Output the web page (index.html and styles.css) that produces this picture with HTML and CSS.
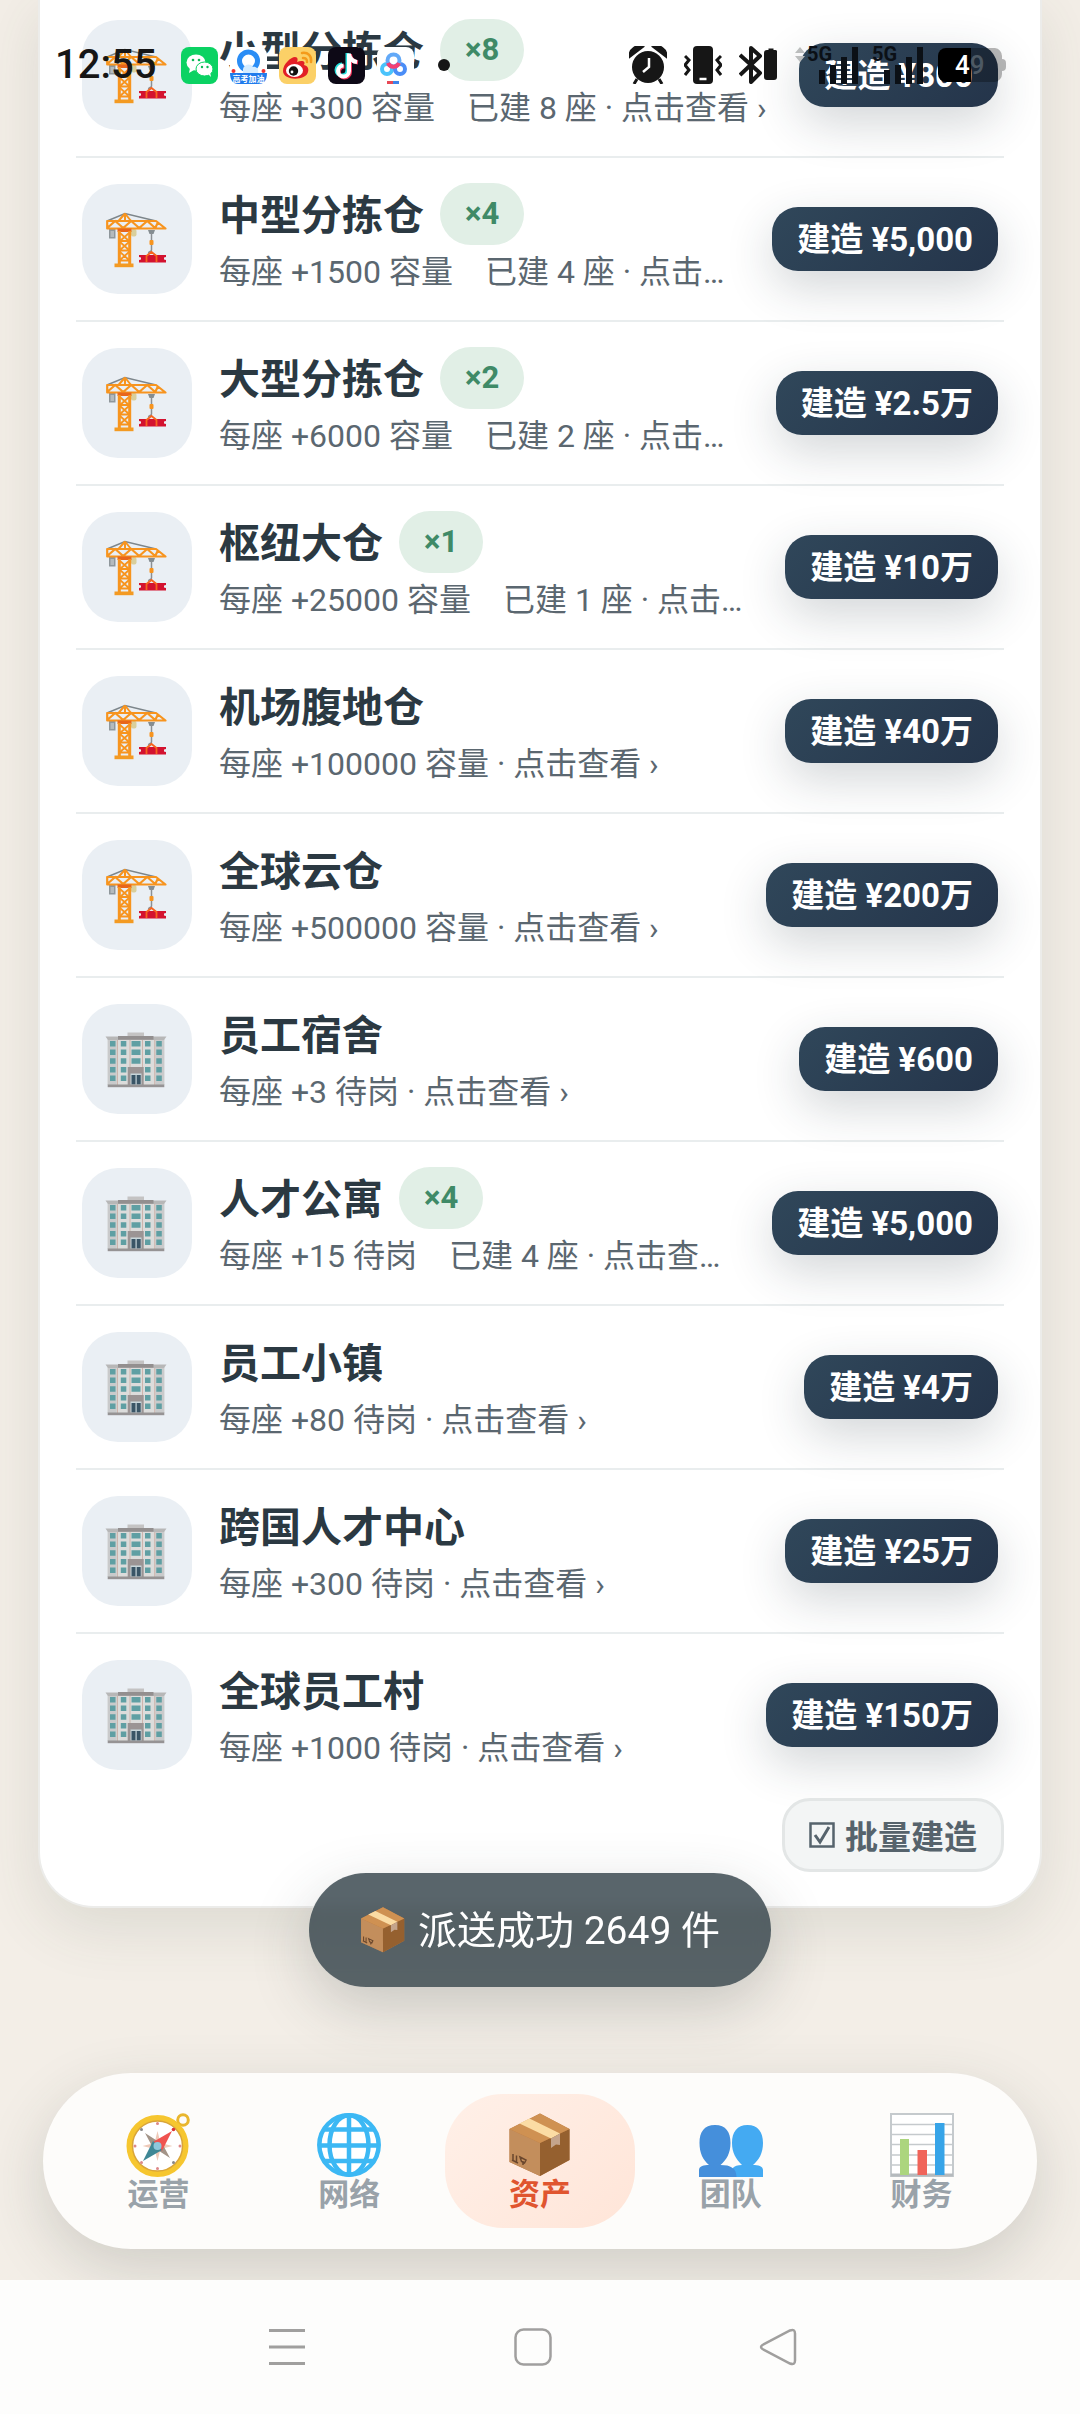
FILE: index.html
```html
<!DOCTYPE html>
<html lang="zh-CN">
<head>
<meta charset="utf-8">
<meta name="viewport" content="width=device-width, initial-scale=1">
<title>资产</title>
<link rel="stylesheet" href="styles.css">
</head>
<body>
<svg class="sprite" aria-hidden="true">
  <symbol id="crane" viewBox="10 9 64 60">
    <path d="M12 21 30 13.500 61 21" fill="none" stroke="#7d868b" stroke-width="1.600"/>
    <rect x="14" y="29" width="6.500" height="9.500" fill="#8f979b"/><rect x="15.500" y="31" width="3.500" height="6" fill="#b4babd"/>
    <rect x="36" y="29" width="5.500" height="7.500" rx="2" fill="#d9cf9c"/>
    <path d="M30 13.500 23.500 21M30 13.500 36 21M30 14v8" stroke="#f7941e" stroke-width="2" fill="none"/>
    <path d="M12.200 21H61l9.500 7.500H12.200zM12.200 28l8-7 8 7 8-7 8 7 8-7 8 7 3-6" fill="none" stroke="#f7941e" stroke-width="2.200" stroke-linejoin="round"/>
    <rect x="22.500" y="28.500" width="14" height="3.500" fill="#e8661b"/>
    <path d="M24.300 31v34M34.700 31v34" stroke="#f7941e" stroke-width="3"/>
    <path d="M25 33l9 8M34 33l-9 8M25 41h9M25 42l9 8M34 42l-9 8M25 50.500h9M25 52l9 8M34 52l-9 8M25 60.500h9" stroke="#f7941e" stroke-width="1.800"/>
    <rect x="19.500" y="63.500" width="19" height="3.700" fill="#f39a22"/>
    <path d="M53 30h7l-1.500 4h-4z" fill="#858d91"/>
    <path d="M56.500 33v17c0 2-3 1-3 3.500" fill="none" stroke="#8b8f92" stroke-width="1.500"/>
    <rect x="54.500" y="40" width="4" height="5" rx="1" fill="#f7941e"/>
    <path d="M44 55h27v2l-2 .5v2l2 .5v2.500H44V60l2-.5v-2L44 57z" fill="#d3122f"/>
    <path d="M51.500 62v-6l5-4 5 4v6" fill="none" stroke="#f7641e" stroke-width="1.800"/>
  </symbol>
  <symbol id="building" viewBox="0 0 64 60">
    <rect x="22.500" y="3.500" width="16.500" height="4.500" fill="#c4c3c3"/>
    <rect x="2.700" y="10" width="56.600" height="46" fill="#dcdcdb"/>
    <rect x="2.700" y="10" width="9" height="46" fill="#c9cacb"/><rect x="50.300" y="10" width="9" height="46" fill="#c9cacb"/>
    <path d="M12.500 10v46M25 10v28M37.500 10v28M49.700 10v46" stroke="#c9a9a0" stroke-width=".8"/>
    <path d="M.5 7.500h61l-2.500 3.500H3z" fill="#b7b7b7"/><rect x="13" y="7" width="35.500" height="3.700" fill="#938f8f"/>
    <rect x="22.700" y="38" width="16" height="18" fill="#9b9494"/>
    <g fill="#5f9fa3">
      <path d="M5 12h5.500v5.500H5zM5 20.600h5.500v5.500H5zM5 29.300h5.500v5.500H5zM5 38h5.500v5.500H5zM5 46.600h5.500v5.500H5z"/>
      <path d="M15.800 12h5.500v5.500h-5.500zM15.800 20.600h5.500v5.500h-5.500zM15.800 29.300h5.500v5.500h-5.500zM15.800 38h5.500v5.500h-5.500zM15.800 46.600h5.500v5.500h-5.500z"/>
      <path d="M26.500 12h9v5.500h-9zM26.500 20.600h9v5.500h-9zM26.500 29.300h9v5.500h-9z"/>
      <path d="M40 12h5.500v5.500H40zM40 20.600h5.500v5.500H40zM40 29.300h5.500v5.500H40zM40 38h5.500v5.500H40zM40 46.600h5.500v5.500H40z"/>
      <path d="M51.300 12h5.500v5.500h-5.500zM51.300 20.600h5.500v5.500h-5.500zM51.300 29.300h5.500v5.500h-5.500zM51.300 38h5.500v5.500h-5.500zM51.300 46.600h5.500v5.500h-5.500z"/>
    </g>
    <rect x="25.500" y="44.500" width="11" height="11.500" fill="#c8d6da"/><path d="M26.500 46h4v9.500h-4zM31.700 46h4v9.500h-4z" fill="#3a5566"/>
    <rect x="2.700" y="55.500" width="56.600" height="2.700" fill="#969394"/>
  </symbol>
  <symbol id="box" viewBox="8 11 64 64">
    <path d="M9.500 27 40 11.500 69.500 27v31L40 74 9.500 60z" fill="#b97a45"/>
    <path d="M9.500 27 40 41v33L9.500 60z" fill="#c38e5c"/>
    <path d="M69.500 27 40 41v33l29.500-16z" fill="#95602f"/>
    <path d="M9.500 27 40 11.500 69.500 27 40 41z" fill="#cf9152"/>
    <path d="M19.500 21.500 29.500 16.500 60 31.500 51 36.500z" fill="#fbdca4"/>
    <path d="M51 36.500 60 31.500v11.500l-4-.5-5 3.500z" fill="#c4a48c"/>
    <path d="M13 52v6M16.500 53.500v6M12 58l6 3M20 55l6 3-1.500 3-3-1.500zM23 59v4" stroke="#6a472d" stroke-width="1.500" fill="none"/>
  </symbol>
</svg>

<div class="screen">
  <header class="status">
    <time class="clock">12:55</time>
    <div class="notices" aria-hidden="true">
      <svg viewBox="0 0 37 37"><rect width="37" height="37" rx="8" fill="#0bd263"/><ellipse cx="15" cy="15.500" rx="9.500" ry="8" fill="#fff"/><path d="M9 21l-1 5 5-3z" fill="#fff"/><ellipse cx="23.500" cy="22" rx="8.500" ry="7" fill="#fff" stroke="#0bd263"/><path d="M27 27l3 3-1-5z" fill="#fff"/><g fill="#0bb957"><circle cx="12" cy="13" r="1.300"/><circle cx="18" cy="13" r="1.300"/><circle cx="21" cy="20" r="1.200"/><circle cx="26.500" cy="20" r="1.200"/></g></svg>
      <svg viewBox="0 0 37 37"><rect width="37" height="37" rx="8" fill="#fff"/><circle cx="18.500" cy="14" r="9" fill="none" stroke="#2a8df5" stroke-width="5"/><path d="M13 22c1-5 8-6 10-2 4-1 6 3 5 6H13z" fill="#d4ecff"/><circle cx="3.500" cy="24" r="2" fill="#e33"/><circle cx="33.500" cy="24" r="2" fill="#e33"/><path d="M0 26h37c0 7-3 11-8 11H8c-5 0-8-4-8-11z" fill="#1f7bec"/><text x="18.500" y="34.500" class="tiny">高考加油</text></svg>
      <svg viewBox="0 0 37 37"><rect width="37" height="37" rx="8" fill="#fbd067"/><path d="M4 24c0-7 8-14 12-14 3 0 3 3 2 5 5-2 9-1 7 3 4 1 5 4 4 7-2 9-25 9-25-1z" fill="#e21f26"/><ellipse cx="15.500" cy="23.500" rx="8.500" ry="6.500" fill="#fff"/><circle cx="14.500" cy="24" r="4.700" fill="#111"/><circle cx="13" cy="25" r="1.400" fill="#fff"/><path d="M23 6c6-1 10 3 9 9M24 11c3 0 4 1 4 4" fill="none" stroke="#f49b1b" stroke-width="2.500" stroke-linecap="round"/></svg>
      <svg viewBox="0 0 37 37"><rect width="37" height="37" rx="8" fill="#0d0916"/><g fill="none" stroke-width="4"><path d="M19.500 6v17a5.500 5.500 0 1 1-5.500-5.500M19.500 7c1 5 4 7 8 7.500" stroke="#25dfdc"/><path d="M22 7v18a5.500 5.500 0 1 1-5.500-5.500M22 8c1 5 4 7 8 7.500" stroke="#f0345a"/><path d="M21 6.500v17.500a5.500 5.500 0 1 1-5.500-5.500M21 7.500c1 5 4 7 8 7.500" stroke="#fff"/></g></svg>
      <svg viewBox="0 0 37 37"><rect width="37" height="37" rx="8" fill="#fff"/><g fill="none" stroke-width="4"><circle cx="10" cy="22" r="5" stroke="#4ac3fb"/><circle cx="23" cy="22" r="5" stroke="#4a8df7"/><circle cx="16.500" cy="13.500" r="6" stroke="#62a9f8"/><path d="M11 16c2 5 9 5 11 0" stroke="#f23f73"/></g><path d="M10 35.500h6" stroke="#e84855" stroke-width="3"/><path d="M16 35.500h6" stroke="#3d83ea" stroke-width="3"/></svg>
      <i class="more"></i>
    </div>
    <div class="system" aria-hidden="true">
      <svg class="sys-icon" viewBox="0 0 38 38"><circle cx="19" cy="21" r="16" fill="#161616"/><path d="M1 10C1 3 8-1 13 1zM37 10c0-7-7-11-12-9zM8 33l-3 5M30 33l3 5" fill="#161616" stroke="#161616" stroke-width="3"/><path d="M20 12v9l-6 5" fill="none" stroke="#fff" stroke-width="2.500"/></svg>
      <svg class="sys-icon" viewBox="0 0 38 38"><rect x="9" y="0" width="20" height="38" rx="4" fill="#161616"/><path d="M15.500 33h7" stroke="#fff" stroke-width="2.500"/><path d="M1 10l4 4-4 5 4 5-4 5M37 10l-4 4 4 5-4 5 4 5" fill="none" stroke="#161616" stroke-width="3"/></svg>
      <svg class="sys-icon" viewBox="0 0 38 38"><path d="M1 9l20 18-9 9V2l9 8L1 29" fill="none" stroke="#161616" stroke-width="4" stroke-linejoin="round"/><path d="M25 7a3 3 0 0 1 3-3h1.500V2.500h5V4H36a2 2 0 0 1 2 3v24a3 3 0 0 1-3 3h-7a3 3 0 0 1-3-3z" fill="#161616"/></svg>
      <svg class="traffic" viewBox="0 0 12 38"><path d="M1 7l5-6 5 6zM1 10l5 6 5-6z" fill="#bbbdbd"/></svg>
      <svg class="signal" viewBox="0 0 52 38"><text x="0" y="15" class="net">5G</text><path d="M12 24h6v14h-6zM23 19h6v19h-6zM34 11h6v27h-6zM45 1h6v37h-6z" fill="#0b1016"/></svg>
      <svg class="signal" viewBox="0 0 52 38"><text x="0" y="15" class="net">5G</text><path d="M12 24h6v14h-6zM23 19h6v19h-6zM34 11h6v27h-6zM45 1h6v37h-6z" fill="#0b1016"/></svg>
      <svg class="battery" viewBox="0 0 68 36"><path d="M33 1h24a8 8 0 0 1 7 8v3q4 0 4 4v4q0 4-4 4v3a8 8 0 0 1-7 8H33z" fill="#000" fill-opacity=".28"/><path d="M33 1v34H8a8 8 0 0 1-8-8V9a8 8 0 0 1 8-8z" fill="#000"/><text x="17" y="27" class="level"><tspan fill="#fff">4</tspan><tspan fill="#4d5964">9</tspan></text></svg>
    </div>
  </header>

  <main class="card">
    <ul class="list">
      <li class="row"><span class="tile"><svg><use href="#crane"/></svg></span><div class="info"><h2><span class="name">小型分拣仓</span><span class="badge">×8</span></h2><p>每座 +300 容量　已建 8 座 · 点击查看 ›</p></div><button class="build">建造 ¥800</button></li>
      <li class="row"><span class="tile"><svg><use href="#crane"/></svg></span><div class="info"><h2><span class="name">中型分拣仓</span><span class="badge">×4</span></h2><p>每座 +1500 容量　已建 4 座 · 点击查看 ›</p></div><button class="build">建造 ¥5,000</button></li>
      <li class="row"><span class="tile"><svg><use href="#crane"/></svg></span><div class="info"><h2><span class="name">大型分拣仓</span><span class="badge">×2</span></h2><p>每座 +6000 容量　已建 2 座 · 点击查看 ›</p></div><button class="build">建造 ¥2.5万</button></li>
      <li class="row"><span class="tile"><svg><use href="#crane"/></svg></span><div class="info"><h2><span class="name">枢纽大仓</span><span class="badge">×1</span></h2><p>每座 +25000 容量　已建 1 座 · 点击查看 ›</p></div><button class="build">建造 ¥10万</button></li>
      <li class="row"><span class="tile"><svg><use href="#crane"/></svg></span><div class="info"><h2><span class="name">机场腹地仓</span></h2><p>每座 +100000 容量 · 点击查看 ›</p></div><button class="build">建造 ¥40万</button></li>
      <li class="row"><span class="tile"><svg><use href="#crane"/></svg></span><div class="info"><h2><span class="name">全球云仓</span></h2><p>每座 +500000 容量 · 点击查看 ›</p></div><button class="build">建造 ¥200万</button></li>
      <li class="row"><span class="tile"><svg><use href="#building"/></svg></span><div class="info"><h2><span class="name">员工宿舍</span></h2><p>每座 +3 待岗 · 点击查看 ›</p></div><button class="build">建造 ¥600</button></li>
      <li class="row"><span class="tile"><svg><use href="#building"/></svg></span><div class="info"><h2><span class="name">人才公寓</span><span class="badge">×4</span></h2><p>每座 +15 待岗　已建 4 座 · 点击查看 ›</p></div><button class="build">建造 ¥5,000</button></li>
      <li class="row"><span class="tile"><svg><use href="#building"/></svg></span><div class="info"><h2><span class="name">员工小镇</span></h2><p>每座 +80 待岗 · 点击查看 ›</p></div><button class="build">建造 ¥4万</button></li>
      <li class="row"><span class="tile"><svg><use href="#building"/></svg></span><div class="info"><h2><span class="name">跨国人才中心</span></h2><p>每座 +300 待岗 · 点击查看 ›</p></div><button class="build">建造 ¥25万</button></li>
      <li class="row"><span class="tile"><svg><use href="#building"/></svg></span><div class="info"><h2><span class="name">全球员工村</span></h2><p>每座 +1000 待岗 · 点击查看 ›</p></div><button class="build">建造 ¥150万</button></li>
    </ul>
    <div class="actions">
      <button class="batch"><svg viewBox="0 0 26 28" aria-hidden="true"><path d="M1.500 2.500h23v23h-23z" fill="none" stroke="#56636c" stroke-width="2.500"/><path d="M6 14l5 7L20 6" fill="none" stroke="#56636c" stroke-width="3"/></svg>批量建造</button>
    </div>
  </main>

  <div class="toast" role="status"><svg aria-hidden="true"><use href="#box"/></svg><span>派送成功 2649 件</span></div>

  <nav class="tabs">
    <a href="#ops"><svg viewBox="0 0 64 64"><circle cx="57" cy="7" r="5.300" fill="none" stroke="#e9b62e" stroke-width="3"/><circle cx="31.500" cy="33" r="28" fill="#fff" stroke="#f6c62f" stroke-width="6"/><circle cx="31.500" cy="33" r="25" fill="none" stroke="#d9a53a" stroke-width="1.500"/><path d="M31.500 18l3 12 12 3-12 3-3 12-3-12-12-3 12-3z" fill="#eec9b8"/><path d="M19 20l14 9-6 6zM44 45l-14-9 6-6z" fill="#a39488"/><path d="M46 18L36 38l-9-9z" fill="#ef5350"/><path d="M17 48l10-20 9 9z" fill="#3f8795"/><circle cx="31.500" cy="33" r="4" fill="#8fc7dc"/><g fill="#d88"><circle cx="47.500" cy="16.500" r="1.800" fill="#d33"/><circle cx="15.500" cy="16.500" r="1.500" fill="#888"/><circle cx="15.500" cy="49.500" r="1.500"/><circle cx="47.500" cy="49.500" r="1.500" fill="#888"/><circle cx="31.500" cy="10.500" r="1.500"/><circle cx="31.500" cy="55.500" r="1.500"/><circle cx="9" cy="33" r="1.500"/><circle cx="54" cy="33" r="1.500"/></g></svg>运营</a>
    <a href="#network"><svg viewBox="0 0 64 64"><g fill="none" stroke="#3cb8f4" stroke-width="4.500"><circle cx="32" cy="32" r="29.700" fill="#fff"/><ellipse cx="32" cy="32" rx="19.500" ry="29.700"/><path d="M32 2v60M2 32.500h60M6 16.500h52M6 48h52"/></g></svg>网络</a>
    <a href="#assets" class="active" aria-current="page"><svg><use href="#box"/></svg>资产</a>
    <a href="#team"><svg viewBox="0 0 64 64"><path d="M33 64c-2-8 1-12 10-12-6-6-10-12-10-22 0-11 5-18 15.500-18S64 19 64 30c0 10-4 17-10 22 5 0 10 1 10 5v7z" fill="#44aaf2"/><path d="M0 64v-7c0-4 5-5 10-5C4 47 .5 40 .5 30 .5 19 5 12 16 12s15.500 7 15.500 18c0 10-4 17-10 22 10 0 16 3 16 12z" fill="#458fdb"/></svg>团队</a>
    <a href="#finance"><svg viewBox="0 0 64 64"><path d="M1 1h62v62H1z" fill="#fff" stroke="#c5cacd" stroke-width="2"/><path d="M1 11.500h62M1 21.500h62M1 31.500h62M1 42h62M1 52h62" stroke="#c5cacd" stroke-width="1.300"/><path d="M1 62h62" stroke="#b5babd" stroke-width="3"/><path d="M10 26h9v36h-9z" fill="#acd57e"/><path d="M27.500 37h9.500v25h-9.500z" fill="#f0645a"/><path d="M45 10h9.500v52H45z" fill="#37a4e8"/></svg>财务</a>
  </nav>

  <footer class="keys">
    <button aria-label="菜单"><svg viewBox="0 0 40 40"><path d="M2 3.500h36M2 20h36M2 36.500h36" stroke="#a09f9e" stroke-width="3"/></svg></button>
    <button aria-label="主页"><svg viewBox="0 0 40 40"><rect x="2.500" y="2.500" width="35" height="35" rx="8" fill="none" stroke="#a09f9e" stroke-width="2.500"/></svg></button>
    <button aria-label="返回"><svg viewBox="0 0 40 40"><path d="M3.500 18L31 3.500q5-2 5 3v27q0 5-5 3L3.500 22q-3-2 0-4z" fill="none" stroke="#a09f9e" stroke-width="2.500"/></svg></button>
  </footer>
</div>
</body>
</html>
```
FILE: styles.css
```css
* { box-sizing: border-box; }

body {
  margin: 0;
  background: #f3eee7;
  color: #2b3942;
  font-family: Roboto, "Noto Sans CJK SC", sans-serif;
}

button { font-family: inherit; border: 0; }

.sprite { position: absolute; width: 0; height: 0; }

.screen {
  position: relative;
  display: flex;
  flex-direction: column;
  min-height: 100vh;
  overflow: hidden;
}

/* status bar, drawn over the scrolled list */
.status {
  position: absolute;
  z-index: 2;
  top: 0;
  left: 0;
  right: 0;
  display: flex;
  align-items: center;
  height: 130px;
  padding: 0 74px 0 55px;
  color: #161616;
}
.clock { font-size: 40px; line-height: 48px; font-weight: 500; }
.notices { display: flex; align-items: center; gap: 12px; margin-left: 25px; }
.notices svg { display: block; width: 37px; height: 37px; }
.more { width: 12px; height: 12px; margin-left: 12px; border-radius: 50%; background: #161616; }
.tiny { font-size: 8px; font-weight: 700; fill: #fff; text-anchor: middle; }
.system { display: flex; align-items: center; gap: 17px; margin-left: auto; }
.system svg { display: block; }
.sys-icon { width: 38px; height: 38px; }
.system .traffic { width: 12px; height: 38px; }
.signal { width: 52px; height: 38px; }
.signal + .signal { margin-left: -4px; }
.traffic + .signal { margin-left: -16px; }
.battery { width: 68px; height: 36px; margin-left: -3px; }
.net { font-size: 20px; font-weight: 700; fill: #0b1016; }
.level { font-size: 26px; font-weight: 500; }

/* asset card */
.card {
  margin: -6px 38px 0;
  padding: 0 36px 34px;
  background: #fff;
  border: 2px solid #ececea;
  border-top: 0;
  border-radius: 0 0 56px 56px;
  box-shadow: 0 20px 60px rgba(60, 70, 60, .12);
}
.list { margin: 0; padding: 0; list-style: none; }
.row {
  display: flex;
  align-items: center;
  padding: 25px 6px;
  border-bottom: 2px solid #e9edee;
}
.row:last-child { border-bottom: 0; }
.tile {
  display: flex;
  flex: none;
  align-items: center;
  justify-content: center;
  width: 110px;
  height: 110px;
  border-radius: 36px;
  background: #eaeff4;
}
.tile svg { width: 64px; height: 60px; }
.info { flex: 1; min-width: 0; margin: 0 27px; }
.info h2 {
  display: flex;
  align-items: center;
  gap: 16px;
  height: 62px;
  margin: 0 0 4px;
  font-size: 41px;
  font-weight: 700;
  white-space: nowrap;
}
.name { padding-bottom: 4px; }
.badge {
  padding: 0 25px;
  border-radius: 31px;
  background: #e1efe6;
  color: #3f8a67;
  font-size: 31px;
  line-height: 62px;
}
.info p {
  margin: 0;
  overflow: hidden;
  color: #5b6770;
  font-size: 32px;
  line-height: 46px;
  text-overflow: ellipsis;
  white-space: nowrap;
}
.build {
  flex: none;
  height: 64px;
  padding: 0 25px 4px;
  border-radius: 26px;
  background: linear-gradient(135deg, #30475a, #24344a);
  box-shadow: 0 16px 48px rgba(36, 52, 60, .2);
  color: #fff;
  font-size: 33px;
  font-weight: 700;
}
.actions { display: flex; justify-content: flex-end; margin-top: 2px; }
.batch {
  display: flex;
  align-items: center;
  gap: 10px;
  height: 74px;
  padding: 0 24px;
  border: 3px solid #e3e6e6;
  border-radius: 28px;
  background: #f3f5f5;
  color: #56636c;
  font-size: 33px;
  font-weight: 700;
}
.batch svg { width: 26px; height: 28px; }

.toast {
  position: absolute;
  z-index: 1;
  bottom: 427px;
  left: 50%;
  transform: translateX(-50%);
  display: flex;
  align-items: center;
  gap: 12px;
  height: 114px;
  padding: 0 51px;
  border-radius: 57px;
  background: rgba(48, 62, 70, .8);
  box-shadow: 0 20px 60px rgba(50, 60, 60, .22);
  backdrop-filter: blur(8px);
  color: #fff;
  font-size: 39px;
  white-space: nowrap;
}
.toast svg { width: 46px; height: 46px; }
.toast span { padding-bottom: 6px; }

/* bottom tabs */
.tabs {
  display: flex;
  margin: auto 43px 31px;
  padding: 21px 20px;
  border-radius: 88px;
  background: #fdfcfa;
  box-shadow: 0 20px 60px rgba(50, 60, 55, .18);
}
.tabs a {
  display: flex;
  flex: 1;
  flex-direction: column;
  align-items: center;
  padding: 19px 0 15px;
  border-radius: 58px;
  color: #99a2a9;
  font-size: 31px;
  font-weight: 700;
  line-height: 36px;
  text-decoration: none;
}
.tabs svg { width: 64px; height: 64px; }
.tabs .active { background: linear-gradient(135deg, #fff0e8, #ffe5d8); color: #e0552f; }

/* phone navigation keys */
.keys {
  position: relative;
  display: flex;
  align-items: center;
  justify-content: center;
  gap: 206px;
  height: 134px;
  padding-right: 14px;
  background: #fdfdfc;
}
.keys button { width: 40px; height: 40px; padding: 0; background: none; }
.keys svg { display: block; width: 40px; height: 40px; }
```
